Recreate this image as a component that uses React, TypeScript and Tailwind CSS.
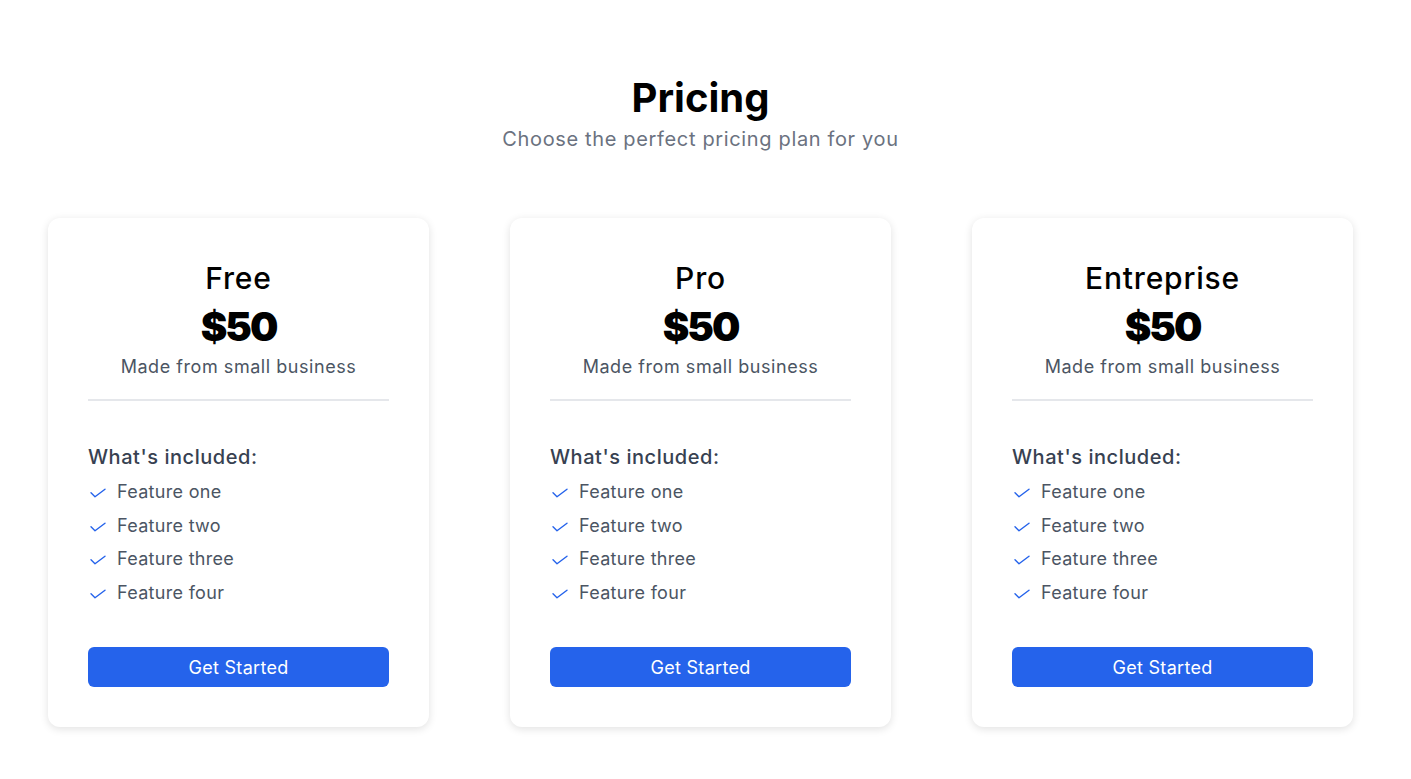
import React from "react";

const plans = ["Free", "Pro", "Entreprise"];
const features = ["Feature one", "Feature two", "Feature three", "Feature four"];

function CheckIcon() {
  return (
    <svg viewBox="0 0 16 10" fill="none" stroke="currentColor" strokeWidth={1.4} className="ml-[2px] mt-[2px] h-[10px] w-[16px] text-[#2563eb] shrink-0">
      <path strokeLinecap="round" strokeLinejoin="round" d="M1 4.8 L5 8.8 L15 1.2" />
    </svg>
  );
}

function Card({ name }: { name: string }) {
  return (
    <div className="rounded-xl bg-white px-10 pt-[42px] pb-10 shadow-[0_2px_8px_rgba(0,0,0,0.12)]">
      <div className="flex flex-col items-center text-center">
        <h2 className="text-[30px] leading-[36px] font-medium tracking-[0.8px] text-black">{name}</h2>
        <p className="mt-[7px] text-[40px] leading-[48px] font-black tracking-[-2px] text-black">$50</p>
        <p className="mt-[2px] text-[18px] leading-[28px] tracking-[0.55px] text-[#4b5563]">Made from small business</p>
      </div>
      <div className="mt-[18px] h-[2px] w-full bg-[#e5e7eb]" />
      <div className="mt-[42px]">
        <p className="text-[20px] leading-[28px] font-medium tracking-[0.55px] text-[#374151]">What's included:</p>
        <ul className="mt-[7px] flex flex-col gap-[5.7px]">
          {features.map((f) => (
            <li key={f} className="flex items-center gap-[11px] text-[18px] leading-[28px] tracking-[0.3px] text-[#4b5563]">
              <CheckIcon />
              <span>{f}</span>
            </li>
          ))}
        </ul>
      </div>
      <button className="mt-[40px] h-[40px] w-full rounded-md bg-[#2563eb] text-[18px] tracking-[0.3px] text-white">
        Get Started
      </button>
    </div>
  );
}

export default function App() {
  return (
    <div className="min-h-screen bg-white pl-[48px] pr-[58px] pt-[72px] pb-[40px]" style={{ fontFamily: "Inter, 'Noto Sans', sans-serif" }}>
      <div className="flex flex-col items-center text-center">
        <h1 className="text-[40px] leading-[52px] font-bold text-black">Pricing</h1>
        <p className="mt-[1px] text-[20px] leading-[28px] tracking-[0.65px] text-[#6b7280]">Choose the perfect pricing plan for you</p>
      </div>
      <div className="mt-[65px] grid grid-cols-3 gap-[81px]">
        {plans.map((p) => (
          <Card key={p} name={p} />
        ))}
      </div>
    </div>
  );
}
